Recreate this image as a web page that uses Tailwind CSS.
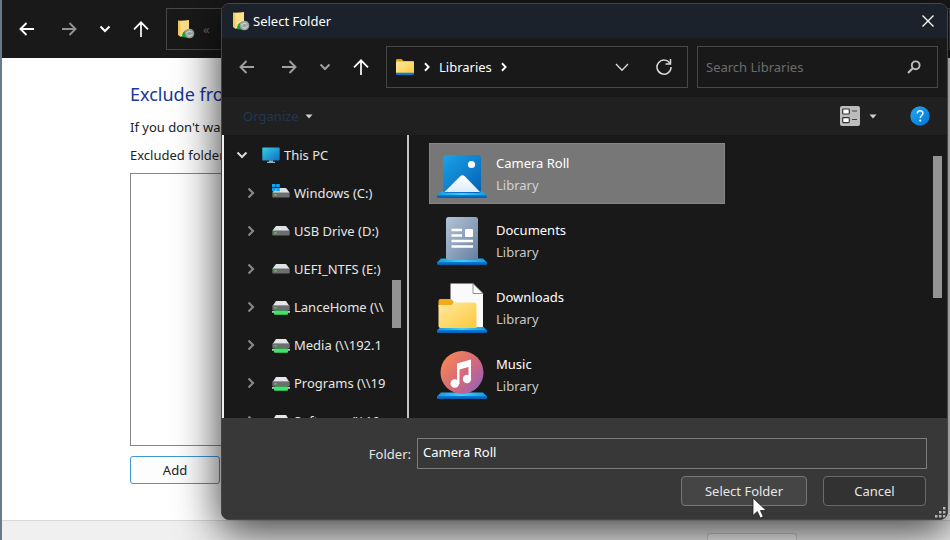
<!DOCTYPE html>
<html lang="en">
<head>
<meta charset="utf-8">
<title>Select Folder</title>
<script src="https://cdn.jsdelivr.net/npm/@tailwindcss/browser@4"></script>
</head>
<body class="relative min-h-screen overflow-hidden bg-white font-['Noto_Sans','Open_Sans',sans-serif] text-[13px] leading-[22px]">
<svg class="absolute size-0" aria-hidden="true">
  <defs>
    <linearGradient id="gBlue" x1="0" y1="0" x2="1" y2="1"><stop offset="0" stop-color="#1aa3ea"/><stop offset="1" stop-color="#0560b4"/></linearGradient>
    <linearGradient id="gTray" x1="0" y1="0" x2="1" y2="0"><stop offset="0" stop-color="#1597dd"/><stop offset=".5" stop-color="#3fd0fb"/><stop offset="1" stop-color="#1597dd"/></linearGradient>
    <linearGradient id="gBase" x1="0" y1="0" x2="0" y2="1"><stop offset="0" stop-color="#0a7fdc"/><stop offset="1" stop-color="#0559a8"/></linearGradient>
    <linearGradient id="gSnow" x1="0" y1="0" x2="0" y2="1"><stop offset="0" stop-color="#ffffff"/><stop offset="1" stop-color="#dcecfb"/></linearGradient>
    <linearGradient id="gDoc" x1="0" y1="0" x2="1" y2="1"><stop offset="0" stop-color="#b4c4d8"/><stop offset="1" stop-color="#66809f"/></linearGradient>
    <linearGradient id="gFolder" x1="0" y1="0" x2="1" y2="1"><stop offset="0" stop-color="#ffe9a0"/><stop offset="1" stop-color="#fdc93c"/></linearGradient>
    <linearGradient id="gMusic" x1="0" y1=".1" x2="1" y2=".9"><stop offset="0" stop-color="#f98a50"/><stop offset=".55" stop-color="#d5697c"/><stop offset="1" stop-color="#8e5fc0"/></linearGradient>
    <linearGradient id="gScreen" x1="0" y1="0" x2="1" y2="1"><stop offset="0" stop-color="#35d0e4"/><stop offset="1" stop-color="#0f6cc4"/></linearGradient>
    <linearGradient id="gHelp" x1="0" y1="0" x2="1" y2="1"><stop offset="0" stop-color="#23a8f2"/><stop offset="1" stop-color="#0074d4"/></linearGradient>
    <symbol id="left" viewBox="0 0 16 16"><path d="M15 8H1.500M7.500 2L1.500 8l6 6" fill="none" stroke="currentColor" stroke-width="1.900"/></symbol>
    <symbol id="right" viewBox="0 0 16 16"><path d="M1 8h13.500M8.500 2l6 6-6 6" fill="none" stroke="currentColor" stroke-width="1.900"/></symbol>
    <symbol id="up" viewBox="0 0 16 16"><path d="M8 16V1.500M1 8.300L8 1.300l7 7" fill="none" stroke="currentColor" stroke-width="1.700"/></symbol>
    <symbol id="down" viewBox="0 0 12 12"><path d="M1.500 3.500L6 8l4.500-4.500" fill="none" stroke="currentColor" stroke-width="2"/></symbol>
    <symbol id="chev" viewBox="0 0 12 12"><path d="M3.500 1.500L8 6l-4.500 4.500" fill="none" stroke="currentColor" stroke-width="2.200"/></symbol>
    <symbol id="caret" viewBox="0 0 8 5"><path d="M.5.5h7L4 4.500z" fill="currentColor"/></symbol>
    <symbol id="sync" viewBox="0 0 18 20">
      <path d="M1 1.500L9 2v14l-6 1.500L1 16z" fill="#f5c95e"/><path d="M3.500 2L12 1v13l-8.500 4z" fill="#ffe08c"/>
      <path d="M5 18c0-5 3-7 7-8v9z" fill="#18a43a"/><circle cx="12.500" cy="14.500" r="4.800" fill="#9da5a8"/>
      <path d="M9.700 14.500c.5-2.500 3.500-3 5-1.200M15.300 15c-.6 2.200-3.500 2.700-5 .9" fill="none" stroke="#e9eeee" stroke-width="1"/>
    </symbol>
    <symbol id="drive" viewBox="0 0 18 18"><path d="M4 4h10l3.500 4.500H.500z" fill="#dfe1e4"/><rect x=".3" y="8" width="17.400" height="5.500" rx="1" fill="#6e6e70"/><path d="M1 8.500h16" stroke="#a9a9ab"/><rect x="2.500" y="10" width="2" height="1.800" fill="#2fe04b"/></symbol>
    <symbol id="windrive" viewBox="0 0 18 18"><path d="M4 4h10l3.500 4.500H.500z" fill="#dfe1e4"/><rect x=".3" y="8" width="17.400" height="5.500" rx="1" fill="#6e6e70"/><path d="M1 8.500h16" stroke="#a9a9ab"/><rect x="2.500" y="10" width="2" height="1.800" fill="#2fe04b"/><path d="M0 0h3.600v3.300H0zM4.200 0h3.600v3.300H4.200zM0 3.900h3.600v3.300H0zM4.200 3.900h3.600v3.300H4.200z" fill="#18a0f0"/></symbol>
    <symbol id="netdrive" viewBox="0 0 18 18"><path d="M4 3h10l3 4.500H1z" fill="#e4e6ea"/><rect x=".3" y="7" width="17.400" height="5.500" rx="1" fill="#6e6e70"/><path d="M1 7.500h16" stroke="#98989a"/><rect x="2.500" y="9" width="2" height="1.600" fill="#2fe04b"/><path d="M0 13h18v1.800H0z" fill="#b9c4bd"/><rect x="2" y="12.500" width="14" height="4.200" rx="1" fill="#3fe26b"/></symbol>
    <symbol id="tray" viewBox="0 0 50 44"><path d="M4 37.500h42l4 4H0z" fill="url(#gTray)"/><path d="M0 41h50v2.500l-1 .5H1l-1-.5z" fill="url(#gBase)"/></symbol>
  </defs>
</svg>

<!-- Indexing window behind the dialog -->
<div class="flex h-screen flex-col border-l-2 border-[#6b7a8b]">
  <header class="flex items-start bg-[#191919] pt-2 pb-2 pl-1 text-white">
    <button aria-label="Back" class="flex h-[42px] w-[42px] items-center justify-center"><svg class="size-4"><use href="#left"/></svg></button>
    <button aria-label="Forward" class="flex h-[42px] w-[42px] items-center justify-center text-[#929292]"><svg class="size-4"><use href="#right"/></svg></button>
    <button aria-label="Recent" class="flex h-[42px] w-[30px] items-center justify-center"><svg class="size-3"><use href="#down"/></svg></button>
    <button aria-label="Up" class="flex h-[42px] w-[42px] items-center justify-center"><svg class="size-4"><use href="#up"/></svg></button>
    <div class="ml-1 flex h-[42px] flex-1 items-center border border-[#474747] pl-[10px]">
      <svg class="h-5 w-[18px]"><use href="#sync"/></svg>
      <span class="ml-2 text-[#666]">«</span>
    </div>
  </header>
  <main class="flex flex-1 flex-col items-start px-32 pt-[22px]">
    <h1 class="text-[18px] leading-7 text-[#17369c]">Exclude from</h1>
    <p class="mt-2 text-[#222]">If you don't want</p>
    <p class="mt-[6px] text-[#222]" id="excluded">Excluded folders</p>
    <div role="listbox" aria-labelledby="excluded" class="mt-[7px] mb-[10px] w-full flex-1 border border-[#858585] bg-white"></div>
    <button class="mb-9 h-[28px] w-[90px] rounded-[3px] border border-[#3f97d8] bg-[#fdfdfd] text-[#222]">Add</button>
  </main>
  <footer class="flex h-5 items-end justify-end gap-4 overflow-hidden border-t border-[#d8d8d8] bg-[#f0f0f0] pr-[153px]">
    <div class="h-[7px] w-[90px] rounded-t-[3px] border border-b-0 border-[#d0d0d0] bg-[#f8f8f8]"></div>
  </footer>
</div>

<!-- Folder picker -->
<section role="dialog" aria-labelledby="dlg-title" class="absolute top-[3px] right-[2px] bottom-[20px] left-[221px] flex flex-col overflow-hidden rounded-lg border border-[#454545] bg-[#191919] text-[#e6e6e6] shadow-[0_10px_44px_2px_rgba(0,0,0,0.75)]">
  <div class="flex h-[34px] items-center bg-[#1b222b] pr-[11px] pl-[10px]">
    <svg class="h-5 w-[18px]"><use href="#sync"/></svg>
    <h2 id="dlg-title" class="ml-[3px] flex-1 text-white">Select Folder</h2>
    <button aria-label="Close" class="flex size-4 items-center justify-center text-white"><svg class="size-3" viewBox="0 0 12 12"><path d="M.5.5l11 11M11.500.5l-11 11" stroke="currentColor" stroke-width="1.300"/></svg></button>
  </div>

  <nav class="flex items-center pt-2 pr-[9px] pb-[9px] pl-1">
    <button aria-label="Back" class="flex h-[42px] w-[42px] items-center justify-center text-[#a0a0a0]"><svg class="size-4"><use href="#left"/></svg></button>
    <button aria-label="Forward" class="flex h-[42px] w-[42px] items-center justify-center text-[#a0a0a0]"><svg class="size-4"><use href="#right"/></svg></button>
    <button aria-label="Recent" class="flex h-[42px] w-[30px] items-center justify-center text-[#a0a0a0]"><svg class="size-3"><use href="#down"/></svg></button>
    <button aria-label="Up" class="flex h-[42px] w-[42px] items-center justify-center text-white"><svg class="size-4"><use href="#up"/></svg></button>
    <div class="ml-1 flex h-[42px] flex-1 items-center border border-[#484848] pr-[13px] pl-[9px] text-white">
      <svg class="h-4 w-[18px]" viewBox="0 0 18 16"><path d="M0 1.500Q0 0 1 0h4.500L7.500 2H17q1 0 1 1v11H0z" fill="#e8a010"/><rect y="2.500" width="18" height="12" rx="1" fill="url(#gFolder)"/><path d="M0 13.800h18V15q0 1-1 1H1q-1 0-1-1z" fill="#0a78d4"/></svg>
      <svg class="ml-2 size-[10px]"><use href="#chev" width="10" height="10"/></svg>
      <a href="#" class="ml-[7px]">Libraries</a>
      <svg class="ml-[7px] size-[10px]"><use href="#chev" width="10" height="10"/></svg>
      <button aria-label="Previous locations" class="ml-auto flex h-6 w-6 items-center justify-center"><svg class="h-[14px] w-[14px]" viewBox="0 0 14 14"><path d="M1 4l6 6.200L13 4" fill="none" stroke="#d8d8d8" stroke-width="1.400"/></svg></button>
      <button aria-label="Refresh" class="ml-5 flex h-6 w-5 items-center justify-center"><svg class="size-4" viewBox="0 0 16 16"><path d="M14 4.500A7 7 0 1 0 15 8" fill="none" stroke="#d8d8d8" stroke-width="1.500"/><path d="M14.500 0v5H9.500" fill="none" stroke="#d8d8d8" stroke-width="1.500"/></svg></button>
    </div>
    <label class="ml-[9px] flex h-[42px] w-[241px] items-center border border-[#484848] pr-4 pl-2">
      <input type="search" aria-label="Search Libraries" placeholder="Search Libraries" class="min-w-0 flex-1 bg-transparent outline-none placeholder:text-[#6c6c6c]">
      <svg class="size-[14px]" viewBox="0 0 14 14"><circle cx="8.700" cy="5.300" r="3.900" fill="none" stroke="#bdbdbd" stroke-width="1.900"/><path d="M6 8L1 13" stroke="#bdbdbd" stroke-width="2.200"/></svg>
    </label>
  </nav>

  <div class="flex h-[38px] items-center bg-[#202020] pr-[17px] pl-[21px]">
    <button class="flex items-center gap-[6px] text-[#22374f]">Organize<svg class="h-[5px] w-2 text-[#d0d0d0]"><use href="#caret"/></svg></button>
    <button aria-label="View" class="ml-auto flex items-center gap-[9px] text-[#d0d0d0]">
      <svg class="size-5" viewBox="0 0 20 20"><rect width="20" height="20" rx="2" fill="#bcbcbc"/><g fill="#fff" stroke="#333" stroke-width="1.200"><rect x="2.700" y="3" width="6.600" height="5" rx=".8"/><rect x="2.700" y="11.600" width="6.600" height="5" rx=".8"/></g><path d="M12 5h5M12 13.500h5" stroke="#444" stroke-width="1.200"/></svg>
      <svg class="h-[5px] w-2"><use href="#caret"/></svg>
    </button>
    <button aria-label="Help" class="ml-[33px]"><svg class="size-5" viewBox="0 0 20 20"><circle cx="10" cy="10" r="9.700" fill="url(#gHelp)"/><path d="M7.300 7.500c0-3.700 5.600-3.600 5.600-.2 0 2.200-2.700 2.300-2.700 4.700" fill="none" stroke="#e8f5ff" stroke-width="1.500"/><circle cx="10.200" cy="14.600" r="1.100" fill="#e8f5ff"/></svg></button>
  </div>

  <div class="flex min-h-0 flex-1 border-l-2 border-[#f0f0f0]">
    <div class="flex w-[185px] shrink-0 border-r-2 border-[#c4c4c4] pt-px">
      <ul class="w-[162px] overflow-hidden whitespace-nowrap">
        <li class="flex h-[38px] items-center pl-3"><svg class="size-3 text-[#d8d8d8]"><use href="#down"/></svg><svg class="ml-[14px] h-4 w-[18px]" viewBox="0 0 18 16"><rect x=".3" y=".5" width="17.400" height="13" rx="1" fill="url(#gScreen)"/><path d="M7 13.500h4v1.300h2V16H5v-1.200h2z" fill="#9db0ba"/></svg><span class="ml-1">This PC</span></li>
        <li class="flex h-[38px] items-center pl-[21px]"><svg class="size-3 text-[#868686]"><use href="#chev"/></svg><svg class="ml-[15px] size-[18px]"><use href="#windrive"/></svg><span class="ml-1">Windows (C:)</span></li>
        <li class="flex h-[38px] items-center pl-[21px]"><svg class="size-3 text-[#868686]"><use href="#chev"/></svg><svg class="ml-[15px] size-[18px]"><use href="#drive"/></svg><span class="ml-1">USB Drive (D:)</span></li>
        <li class="flex h-[38px] items-center pl-[21px]"><svg class="size-3 text-[#868686]"><use href="#chev"/></svg><svg class="ml-[15px] size-[18px]"><use href="#drive"/></svg><span class="ml-1">UEFI_NTFS (E:)</span></li>
        <li class="flex h-[38px] items-center pl-[21px]"><svg class="size-3 shrink-0 text-[#868686]"><use href="#chev"/></svg><svg class="ml-[15px] size-[18px] shrink-0"><use href="#netdrive"/></svg><span class="ml-1">LanceHome (\\</span></li>
        <li class="flex h-[38px] items-center pl-[21px]"><svg class="size-3 shrink-0 text-[#868686]"><use href="#chev"/></svg><svg class="ml-[15px] size-[18px] shrink-0"><use href="#netdrive"/></svg><span class="ml-1">Media (\\192.1</span></li>
        <li class="flex h-[38px] items-center pl-[21px]"><svg class="size-3 shrink-0 text-[#868686]"><use href="#chev"/></svg><svg class="ml-[15px] size-[18px] shrink-0"><use href="#netdrive"/></svg><span class="ml-1">Programs (\\19</span></li>
        <li class="flex h-[38px] items-center pl-[21px]"><svg class="size-3 shrink-0 text-[#868686]"><use href="#chev"/></svg><svg class="ml-[15px] size-[18px] shrink-0"><use href="#netdrive"/></svg><span class="ml-1">Software (\\19</span></li>
      </ul>
      <div class="flex flex-1 justify-center pt-36"><div class="h-12 w-[9px] bg-[#939393]"></div></div>
    </div>

    <ul class="flex flex-1 flex-col justify-between pt-2 pb-[13px] pl-5">
      <li class="flex h-[61px] w-[296px] items-center border border-[#868686] bg-[#777] pl-[7px]">
        <svg class="mt-1 h-11 w-[50px]" viewBox="0 0 50 44"><use href="#tray"/><rect x="6" y="1" width="38" height="38" rx="3.500" fill="url(#gBlue)"/><path d="M7.500 38L23 22.500q2.500-2.500 5 0L43 38z" fill="url(#gSnow)"/><circle cx="34.500" cy="10.500" r="3.600" fill="#fff"/></svg>
        <div class="ml-[9px]"><p class="text-white">Camera Roll</p><p class="text-[#d2d2d2]">Library</p></div>
      </li>
      <li class="flex h-[61px] w-[296px] items-center pl-2">
        <svg class="h-12 w-[50px]" viewBox="0 0 50 48"><use href="#tray" y="4" width="50" height="44"/><rect x="9" y="0" width="32" height="43" rx="2.500" fill="url(#gDoc)"/><path d="M14.500 13H25M14.500 18.500H25M14.500 24H36M14.500 29.500H36" stroke="#fff" stroke-width="2.400"/><rect x="28" y="12" width="8" height="8" rx="1" fill="#fff"/></svg>
        <div class="ml-[9px]"><p class="text-white">Documents</p><p class="text-[#c8c8c8]">Library</p></div>
      </li>
      <li class="flex h-[61px] w-[296px] items-center pl-2">
        <svg class="h-[50px] w-[50px]" viewBox="0 0 50 50"><use href="#tray" y="6" width="50" height="44"/><path d="M13.500.5H36l10 10V44H13.500z" fill="#fafafa"/><path d="M36 .5v10h10z" fill="#fff" stroke="#777" stroke-width=".8"/><path d="M1.500 18q0-2 2-2H14l3 3-3 5H1.500z" fill="#f3aa1a"/><path d="M1.500 22h13l3-2.500H37q2.500 0 2.500 2.500v23H3.500q-2 0-2-2z" fill="url(#gFolder)"/></svg>
        <div class="ml-[9px]"><p class="text-white">Downloads</p><p class="text-[#c8c8c8]">Library</p></div>
      </li>
      <li class="flex h-[61px] w-[296px] items-center pl-2">
        <svg class="h-12 w-[50px]" viewBox="0 0 50 48"><use href="#tray" y="4" width="50" height="44"/><circle cx="25" cy="21.500" r="21.500" fill="url(#gMusic)"/><path d="M20 12.500L34 8.500v19.500h-2.500V16l-9 2.600V33H20z" fill="#fff"/><circle cx="17.800" cy="32.500" r="4.300" fill="#fff"/><circle cx="30" cy="28" r="4.200" fill="#fff"/></svg>
        <div class="ml-[9px]"><p class="text-white">Music</p><p class="text-[#c8c8c8]">Library</p></div>
      </li>
    </ul>
    <div class="w-[14px] shrink-0 pt-[21px]"><div class="h-[142px] w-[9px] bg-[#939393]"></div></div>
  </div>

  <form class="relative bg-[#383838] pt-5 pr-5 pb-[13px]">
    <div class="flex items-center justify-end">
      <label for="folder" class="w-[195px] pr-[6px] text-right">Folder:</label>
      <input id="folder" value="Camera Roll" class="h-[31px] min-w-0 flex-1 border border-[#7d7d7d] bg-[#383838] px-[5px] pb-[3px] text-white outline-none">
    </div>
    <div class="mt-[7px] flex justify-end gap-4 pr-px">
      <button type="button" class="h-[30px] w-[126px] rounded-[4px] border border-[#777] bg-[#454545]">Select Folder</button>
      <button type="button" class="h-[30px] w-[103px] rounded-[4px] border border-[#6a6a6a] bg-[#323232]">Cancel</button>
    </div>
    <svg class="absolute right-px bottom-px size-[11px]" viewBox="0 0 11 11"><path d="M8 0h2.500v2.500H8zM4 4h2.500v2.500H4zM8 4h2.500v2.500H8zM0 8h2.500v2.500H0zM4 8h2.500v2.500H4zM8 8h2.500v2.500H8z" fill="#b5b5b5"/></svg>
    <svg class="absolute right-[179px] bottom-0 h-[22px] w-4" viewBox="0 0 16 22"><path d="M1 1v17.500l4.300-4 3 6.500 3-1.400-2.900-6.100h5.800z" fill="#fff" stroke="#222" stroke-width=".8"/></svg>
  </form>
</section>
</body>
</html>
